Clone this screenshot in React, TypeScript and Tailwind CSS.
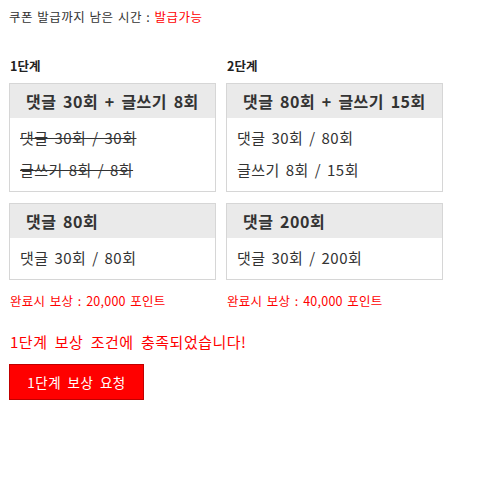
import React from "react";

const font = { fontFamily: '"Noto Sans CJK KR", "Noto Sans", sans-serif' };

function Box({
  title,
  lines,
  strike,
  width,
}: {
  title: string;
  lines: string[];
  strike?: boolean;
  width: string;
}) {
  return (
    <div className={`${width} border border-[#d6d6d6] bg-white`}>
      <div className="h-[34px] bg-[#eaeaea] pl-[16px] flex items-center text-[16px] font-bold text-[#333] whitespace-nowrap tracking-[0.5px] [word-spacing:2.5px]">
        {title}
      </div>
      <div className="pt-[4px] pb-[5px] pl-[10px]">
        {lines.map((l) => (
          <div
            key={l}
            className={`h-[32px] leading-[32px] text-[15px] text-[#333] whitespace-nowrap tracking-[0.5px] [word-spacing:2px] ${strike ? "line-through" : ""}`}
          >
            {l}
          </div>
        ))}
      </div>
    </div>
  );
}

export default function App() {
  return (
    <div className="bg-white min-h-[494px] pl-[9px] pt-[7px]" style={font}>
      <div className="text-[12.5px] leading-[19px] text-[#333] whitespace-nowrap tracking-[0.5px] [word-spacing:1px]">
        쿠폰 발급까지 남은 시간 : <span className="text-[#ff0000]">발급가능</span>
      </div>

      <div className="flex gap-[10px] mt-[31px]">
        <div className="flex flex-col w-[207px]">
          <div className="text-[12.5px] font-bold text-[#222] leading-[18px] pl-[1px]">1단계</div>
          <div className="mt-[8px]">
            <Box
              width="w-[207px]"
              title="댓글 30회 + 글쓰기 8회"
              lines={["댓글 30회 / 30회", "글쓰기 8회 / 8회"]}
              strike
            />
          </div>
          <div className="mt-[11px]">
            <Box width="w-[207px]" title="댓글 80회" lines={["댓글 30회 / 80회"]} />
          </div>
          <div className="mt-[13px] text-[12.5px] leading-[16px] text-[#ff0000] whitespace-nowrap pl-[1px] tracking-[0.25px] [word-spacing:1.5px]">
            완료시 보상 : 20,000 포인트
          </div>
        </div>
        <div className="flex flex-col w-[217px]">
          <div className="text-[12.5px] font-bold text-[#222] leading-[18px] pl-[1px]">2단계</div>
          <div className="mt-[8px]">
            <Box
              width="w-[217px]"
              title="댓글 80회 + 글쓰기 15회"
              lines={["댓글 30회 / 80회", "글쓰기 8회 / 15회"]}
            />
          </div>
          <div className="mt-[11px]">
            <Box width="w-[217px]" title="댓글 200회" lines={["댓글 30회 / 200회"]} />
          </div>
          <div className="mt-[13px] text-[12.5px] leading-[16px] text-[#ff0000] whitespace-nowrap pl-[1px] tracking-[0.25px] [word-spacing:1.5px]">
            완료시 보상 : 40,000 포인트
          </div>
        </div>
      </div>

      <div className="mt-[23px] text-[15px] leading-[20px] text-[#ff0000] whitespace-nowrap pl-[1px] tracking-[0.5px] [word-spacing:3.5px]">
        1단계 보상 조건에 충족되었습니다!
      </div>

      <button
        className="mt-[12px] w-[135px] h-[36px] bg-[#ff0000] border border-[#c00000] text-white text-[13.5px] flex items-center justify-center whitespace-nowrap tracking-[0.5px] [word-spacing:3px]"
        style={font}
      >
        1단계 보상 요청
      </button>
    </div>
  );
}
